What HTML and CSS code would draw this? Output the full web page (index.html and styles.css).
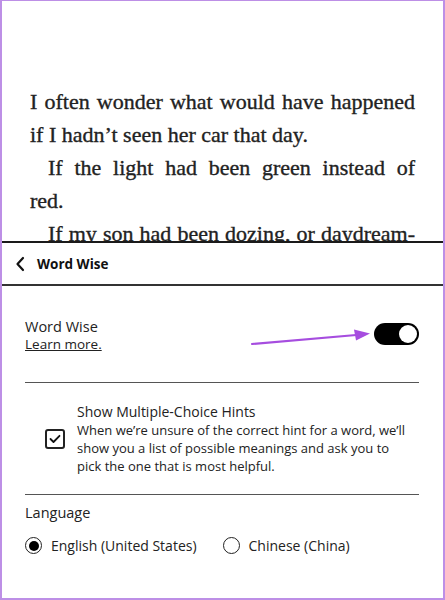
FILE: index.html
```html
<!DOCTYPE html>
<html>
<head>
<meta charset="utf-8">
<link rel="stylesheet" href="styles.css">
</head>
<body>
<div class="frame">
  <div class="book">
    <div class="line full">I often wonder what would have happened</div>
    <div class="line">if I hadn’t seen her car that day.</div>
    <div class="line full indent">If the light had been green instead of</div>
    <div class="line">red.</div>
    <div class="line full indent">If my son had been dozing, or daydream-</div>
  </div>
  <div class="panel">
    <div class="header">
      <svg class="chev" width="10" height="16" viewBox="0 0 10 16"><path d="M8 2 L2.5 8 L8 14" fill="none" stroke="#111" stroke-width="2.2" stroke-linecap="round" stroke-linejoin="round"/></svg>
      <span class="title">Word Wise</span>
    </div>
    <div class="row ww">
      <div class="ww-text">
        <div class="label">Word Wise</div>
        <a class="learn">Learn more.</a>
      </div>
      <div class="toggle"><span class="knob"></span></div>
      <svg class="arrow" width="130" height="20" viewBox="0 0 130 20"><path d="M2 17 L112 7.5" stroke="#a64ddf" stroke-width="2.2" fill="none" stroke-linecap="round"/><path d="M104 2.5 L120 6.5 L106 13.5 Z" fill="#a64ddf"/></svg>
    </div>
    <div class="divider"></div>
    <div class="hints">
      <div class="check"><svg width="12" height="10" viewBox="0 0 12 10"><path d="M1.5 5 L4.5 8 L10.5 1.8" fill="none" stroke="#111" stroke-width="1.8" stroke-linecap="round" stroke-linejoin="round"/></svg></div>
      <div class="hint-text">
        <div class="hint-title">Show Multiple-Choice Hints</div>
        <div class="hint-desc">When we’re unsure of the correct hint for a word, we’ll show you a list of possible meanings and ask you to pick the one that is most helpful.</div>
      </div>
    </div>
    <div class="divider"></div>
    <div class="lang">
      <div class="label">Language</div>
      <div class="radios">
        <div class="radio-item"><span class="radio on"></span><span>English (United States)</span></div>
        <div class="radio-item"><span class="radio"></span><span>Chinese (China)</span></div>
      </div>
    </div>
  </div>
</div>
</body>
</html>
```
FILE: styles.css
```css
html, body { margin: 0; padding: 0; background: #fff; }
.frame {
  width: 445px; height: 600px; box-sizing: border-box;
  border: 2px solid #bd8fe6; border-top-width: 1px;
  overflow: hidden; background: #fff;
}
.book {
  height: 240px; overflow: hidden; box-sizing: border-box;
  padding: 84px 28px 0 28px;
  font-family: "Liberation Serif", serif; font-size: 22px; line-height: 33px; color: #222;
  -webkit-text-stroke: 0.35px #222;
}
.line { white-space: nowrap; height: 33px; }
.line.full { text-align: justify; text-align-last: justify; white-space: normal; }
.line.indent { padding-left: 18px; }
.panel {
  border-top: 2px solid #1a1a1a;
  font-family: "Open Sans", sans-serif; color: #222;
}
.header {
  height: 43px; box-sizing: border-box; border-bottom: 2px solid #333;
  display: flex; align-items: center; padding-left: 13px; padding-top: 1px;
}
.chev { margin-right: 12px; }
.title { font-weight: 700; font-size: 13.5px; color: #111; }
.row.ww {
  position: relative;
  display: flex; justify-content: space-between; align-items: center;
  padding: 32px 24px 0 23px;
}
.label { font-size: 14.5px; line-height: 18px; }
.learn { display: block; font-size: 13.5px; line-height: 17px; text-decoration: underline; color: #222; }
.toggle {
  width: 45px; height: 22px; border-radius: 11px; background: #000;
  position: relative; margin-top: -4px;
}
.knob {
  position: absolute; right: 2px; top: 2px; width: 18px; height: 18px;
  border-radius: 50%; background: #fff;
}
.arrow { position: absolute; left: 248px; top: 41px; }
.divider { height: 1px; background: #555; margin: 0 24px 0 23px; }
.row.ww + .divider { margin-top: 29px; }
.hints { display: flex; align-items: center; padding: 19px 36px 19px 43px; }
.check {
  width: 16px; height: 16px; border: 2px solid #222; border-radius: 3px;
  display: flex; align-items: center; justify-content: center; margin-right: 12px; flex: none;
}
.hint-title { font-size: 14px; line-height: 19px; }
.hint-desc { font-size: 13px; line-height: 18px; }
.lang { padding: 9px 23px; }
.radios { display: flex; align-items: center; margin-top: 14px; }
.radio-item { display: flex; align-items: center; font-size: 14px; margin-right: 26px; }
.radio {
  width: 15px; height: 15px; border: 1.5px solid #222; border-radius: 50%;
  margin-right: 9px; box-sizing: content-box; position: relative;
}
.radio.on::after {
  content: ""; position: absolute; left: 2.5px; top: 2.5px; width: 10px; height: 10px;
  border-radius: 50%; background: #000;
}
```
